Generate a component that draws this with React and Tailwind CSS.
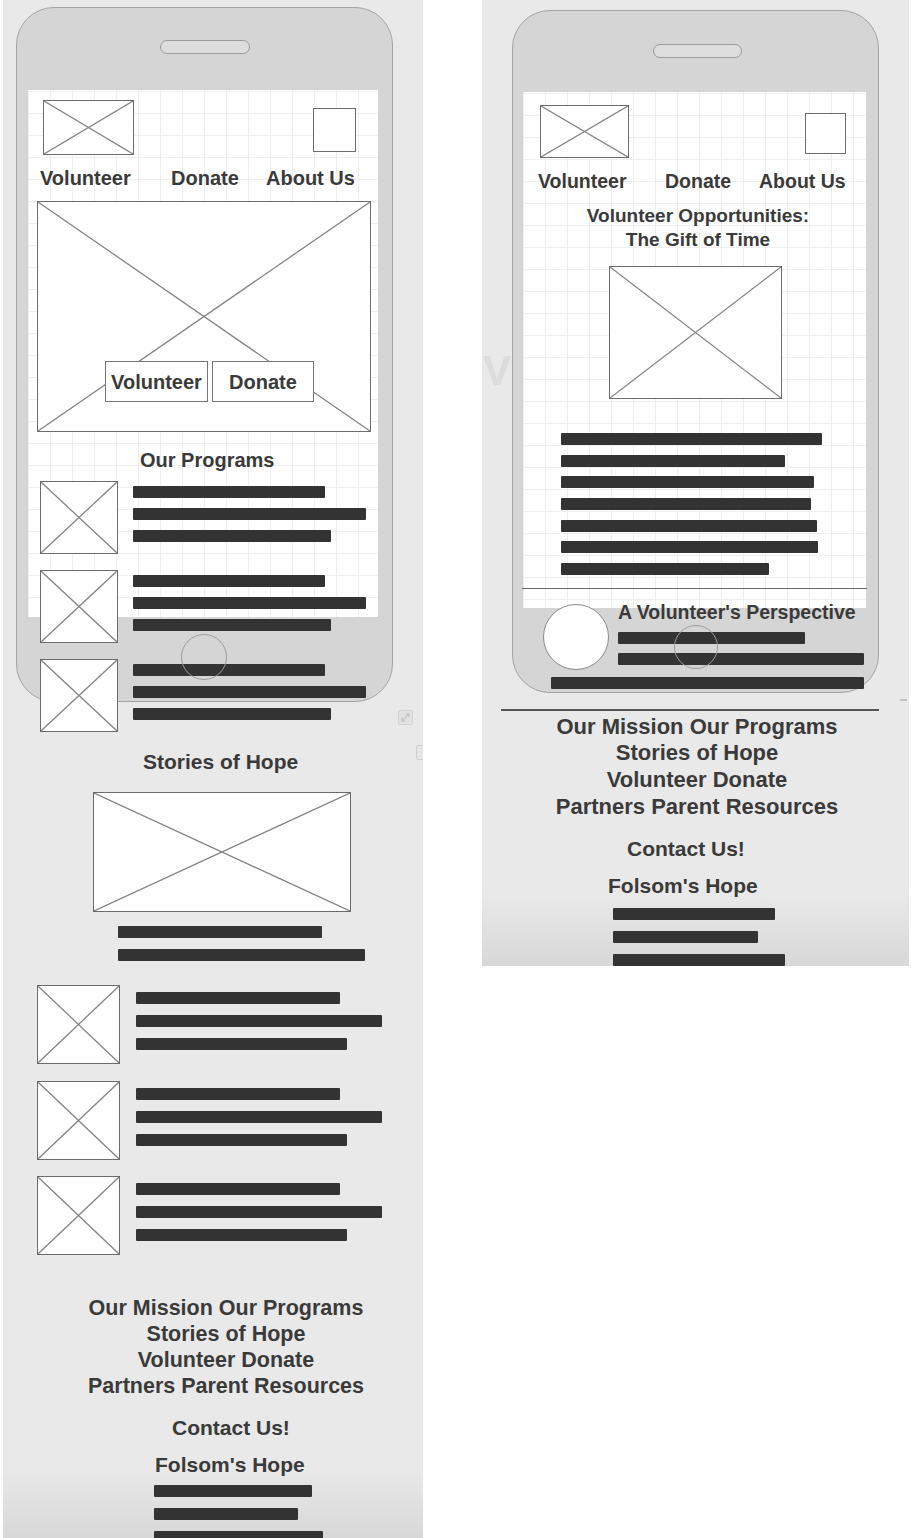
const ink = "text-[#3a3a3a] font-bold";
const grid =
  "bg-white [background-image:linear-gradient(#efefef_1px,transparent_1px),linear-gradient(90deg,#efefef_1px,transparent_1px)] [background-size:22px_22px] [background-position:0_1px]";

function XBox({ className = "", children }) {
  return (
    <div className={`relative bg-white border-[1.5px] border-[#6c6c6c] ${className}`}>
      <svg className="absolute inset-0 h-full w-full" viewBox="0 0 100 100" preserveAspectRatio="none">
        <line x1="0" y1="0" x2="100" y2="100" stroke="#858585" strokeWidth="1.3" vectorEffect="non-scaling-stroke" />
        <line x1="100" y1="0" x2="0" y2="100" stroke="#858585" strokeWidth="1.3" vectorEffect="non-scaling-stroke" />
      </svg>
      {children}
    </div>
  );
}

function Bar({ className = "" }) {
  return <div className={`h-3 shrink-0 rounded-[1px] bg-[#333] ${className}`} />;
}

function Row({ boxClass, barsClass, bars }) {
  return (
    <div className="flex items-start">
      <XBox className={`shrink-0 ${boxClass}`} />
      <div className={`flex flex-col ${barsClass}`}>
        {bars.map((w, i) => (
          <Bar key={i} className={w} />
        ))}
      </div>
    </div>
  );
}

function Phone({ className, speakerClass, screenClass }) {
  return (
    <div className={`absolute rounded-[38px] border-[1.5px] border-[#a3a3a3] bg-[#d5d5d5] ${className}`}>
      <div className={`absolute h-[14px] rounded-full border border-[#9a9a9a] bg-[#dddddd] ${speakerClass}`} />
      <div className={`absolute ${grid} ${screenClass}`} />
    </div>
  );
}

function LeftPanel() {
  const programRows = [0, 1, 2];
  const storyRows = [0, 1, 2];
  return (
    <div className="relative ml-[3px] h-[1538px] w-[420px] shrink-0 overflow-hidden [background-image:linear-gradient(to_bottom,#e9e9e9_95.5%,#d8d8d8)]">
      <Phone
        className="left-[13px] top-[7px] h-[695px] w-[377px]"
        speakerClass="left-[143px] top-[32px] w-[90px]"
        screenClass="left-[11px] top-[82px] h-[527px] w-[350px]"
      />

      <div className="relative">
        <div className="flex items-start pl-[40px] pt-[100px]">
          <XBox className="h-[55px] w-[91px]" />
          <div className="ml-[179px] mt-[8px] h-[44px] w-[43px] border-[1.5px] border-[#6c6c6c] bg-white" />
        </div>

        <div className={`mt-[11px] flex pl-[37px] text-[20px] leading-[24px] whitespace-nowrap ${ink}`}>
          <span className="w-[131px]">Volunteer</span>
          <span className="w-[95px]">Donate</span>
          <span>About Us</span>
        </div>

        <XBox className="ml-[34px] mt-[11px] flex h-[231px] w-[334px] items-end pb-[29px] pl-[67px]">
          <div className="relative flex gap-[4px]">
            <div className={`flex h-[41px] w-[103px] items-center justify-center border-[1.5px] border-[#777] bg-white text-[20px] ${ink}`}>
              Volunteer
            </div>
            <div className={`flex h-[41px] w-[102px] items-center justify-center border-[1.5px] border-[#777] bg-white text-[20px] ${ink}`}>
              Donate
            </div>
          </div>
        </XBox>

        <div className={`mt-[16px] pl-[137px] text-[20px] leading-[24px] ${ink}`}>Our Programs</div>

        <div className="mt-[9px] flex flex-col gap-[16px] pl-[37px]">
          {programRows.map((r) => (
            <Row
              key={r}
              boxClass="h-[73px] w-[78px]"
              barsClass="ml-[15px] gap-[10px] pt-[5px]"
              bars={["w-[192px]", "w-[233px]", "w-[198px]"]}
            />
          ))}
        </div>

        <div className={`mt-[18px] pl-[140px] text-[21px] leading-[24px] ${ink}`}>Stories of Hope</div>

        <XBox className="ml-[90px] mt-[18px] h-[120px] w-[258px]" />

        <div className="ml-[115px] mt-[14px] flex flex-col gap-[11px]">
          <Bar className="w-[204px]" />
          <Bar className="w-[247px]" />
        </div>

        <div className="mt-[24px] flex flex-col gap-[16.5px] pl-[34px]">
          {storyRows.map((r) => (
            <Row
              key={r}
              boxClass="h-[79px] w-[83px]"
              barsClass="ml-[16px] gap-[11px] pt-[7px]"
              bars={["w-[204px]", "w-[246px]", "w-[211px]"]}
            />
          ))}
        </div>

        <div className={`ml-[27px] mt-[40px] w-[392px] text-center text-[21.5px] leading-[26px] ${ink}`}>
          <div>Our Mission Our Programs</div>
          <div>Stories of Hope</div>
          <div>Volunteer Donate</div>
          <div>Partners Parent Resources</div>
        </div>

        <div className={`mt-[16px] pl-[169px] text-[21px] leading-[26px] ${ink}`}>Contact Us!</div>
        <div className={`mt-[11px] pl-[152px] text-[21px] leading-[26px] ${ink}`}>Folsom's Hope</div>

        <div className="ml-[151px] mt-[7px] flex flex-col gap-[11px]">
          <Bar className="w-[158px]" />
          <Bar className="w-[144px]" />
          <Bar className="w-[169px]" />
        </div>
      </div>

      {/* home button sits over the content */}
      <div className="absolute left-[178px] top-[634px] h-[46px] w-[46px] rounded-full border-[1.5px] border-[#9d9d9d]" />

      {/* editor handles */}
      <div className="absolute left-[395px] top-[710px] flex h-[15px] w-[15px] items-center justify-center rounded-[2px] border border-[#d2d2d2] bg-[#e2e2e2]">
        <svg width="11" height="11" viewBox="0 0 11 11">
          <path d="M2 9 L9 2 M5.5 2 H9 V5.5 M2 5.5 V9 H5.5" stroke="#c4c4c4" strokeWidth="1.2" fill="none" />
        </svg>
      </div>
      <div className="absolute left-[413px] top-[745px] h-[15px] w-[12px] rounded-[2px] border border-[#cfcfcf] bg-[#e6e6e6]" />
    </div>
  );
}

function RightPanel() {
  return (
    <div className="relative ml-[59px] h-[966px] w-[427px] shrink-0 overflow-hidden [background-image:linear-gradient(to_bottom,#e9e9e9_92.5%,#d8d8d8)]">
      {/* faint label left behind the phone */}
      <div className="absolute left-[1px] top-[350px] text-[42px] font-bold leading-[42px] text-[#dcdcdc]">V</div>

      <Phone
        className="left-[30px] top-[10px] h-[683px] w-[367px]"
        speakerClass="left-[140px] top-[33px] w-[89px]"
        screenClass="left-[10px] top-[81px] h-[516px] w-[343px]"
      />

      <div className="relative">
        <div className="flex items-start pl-[58px] pt-[105px]">
          <XBox className="h-[53px] w-[89px]" />
          <div className="ml-[176px] mt-[8px] h-[41px] w-[41px] border-[1.5px] border-[#6c6c6c] bg-white" />
        </div>

        <div className={`mt-[11px] flex pl-[56px] text-[19.5px] leading-[24px] whitespace-nowrap ${ink}`}>
          <span className="w-[127px]">Volunteer</span>
          <span className="w-[94px]">Donate</span>
          <span>About Us</span>
        </div>

        <div className={`ml-[30px] mt-[11px] w-[372px] text-center text-[19px] leading-[24px] ${ink}`}>
          <div>Volunteer Opportunities:</div>
          <div>The Gift of Time</div>
        </div>

        <XBox className="ml-[127px] mt-[14px] h-[133px] w-[173px]" />

        <div className="ml-[79px] mt-[34px] flex flex-col gap-[9.7px]">
          <Bar className="w-[261px]" />
          <Bar className="w-[224px]" />
          <Bar className="w-[253px]" />
          <Bar className="w-[250px]" />
          <Bar className="w-[256px]" />
          <Bar className="w-[257px]" />
          <Bar className="w-[208px]" />
        </div>

        <div className="ml-[40px] mt-[13px] h-px w-[345px] bg-[#6a6a6a]" />

        <div className="mt-[11px] flex items-start pl-[61px]">
          <div className="mt-[4px] h-[66px] w-[66px] shrink-0 rounded-full border-[1.5px] border-[#8a8a8a] bg-white" />
          <div className="ml-[9px] flex flex-col">
            <div className={`whitespace-nowrap text-[19.5px] leading-[24px] ${ink}`}>A Volunteer's Perspective</div>
            <div className="mt-[8px] flex flex-col gap-[9px]">
              <Bar className="w-[187px]" />
              <Bar className="w-[246px]" />
            </div>
          </div>
        </div>

        <Bar className="ml-[69px] mt-[7px] w-[313px]" />

        <div className="ml-[19px] mt-[20px] h-[1.5px] w-[378px] bg-[#555]" />

        <div className={`ml-[30px] mt-[3px] w-[370px] text-center text-[22px] leading-[26.7px] ${ink}`}>
          <div>Our Mission Our Programs</div>
          <div>Stories of Hope</div>
          <div>Volunteer Donate</div>
          <div>Partners Parent Resources</div>
        </div>

        <div className={`mt-[16px] pl-[145px] text-[21px] leading-[26px] ${ink}`}>Contact Us!</div>
        <div className={`mt-[11px] pl-[126px] text-[21px] leading-[26px] ${ink}`}>Folsom's Hope</div>

        <div className="ml-[131px] mt-[9px] flex flex-col gap-[11px]">
          <Bar className="w-[162px]" />
          <Bar className="w-[145px]" />
          <Bar className="w-[172px]" />
        </div>
      </div>

      <div className="absolute left-[192px] top-[625px] h-[44px] w-[44px] rounded-full border-[1.5px] border-[#9d9d9d]" />
      <div className="absolute left-[418px] top-[699px] h-[2px] w-[7px] bg-[#c2c2c2]" />
    </div>
  );
}

export default function App() {
  return (
    <div className="flex min-h-[1538px] w-[911px] items-start bg-white font-['Liberation_Sans',Arial,sans-serif]">
      <LeftPanel />
      <RightPanel />
    </div>
  );
}
